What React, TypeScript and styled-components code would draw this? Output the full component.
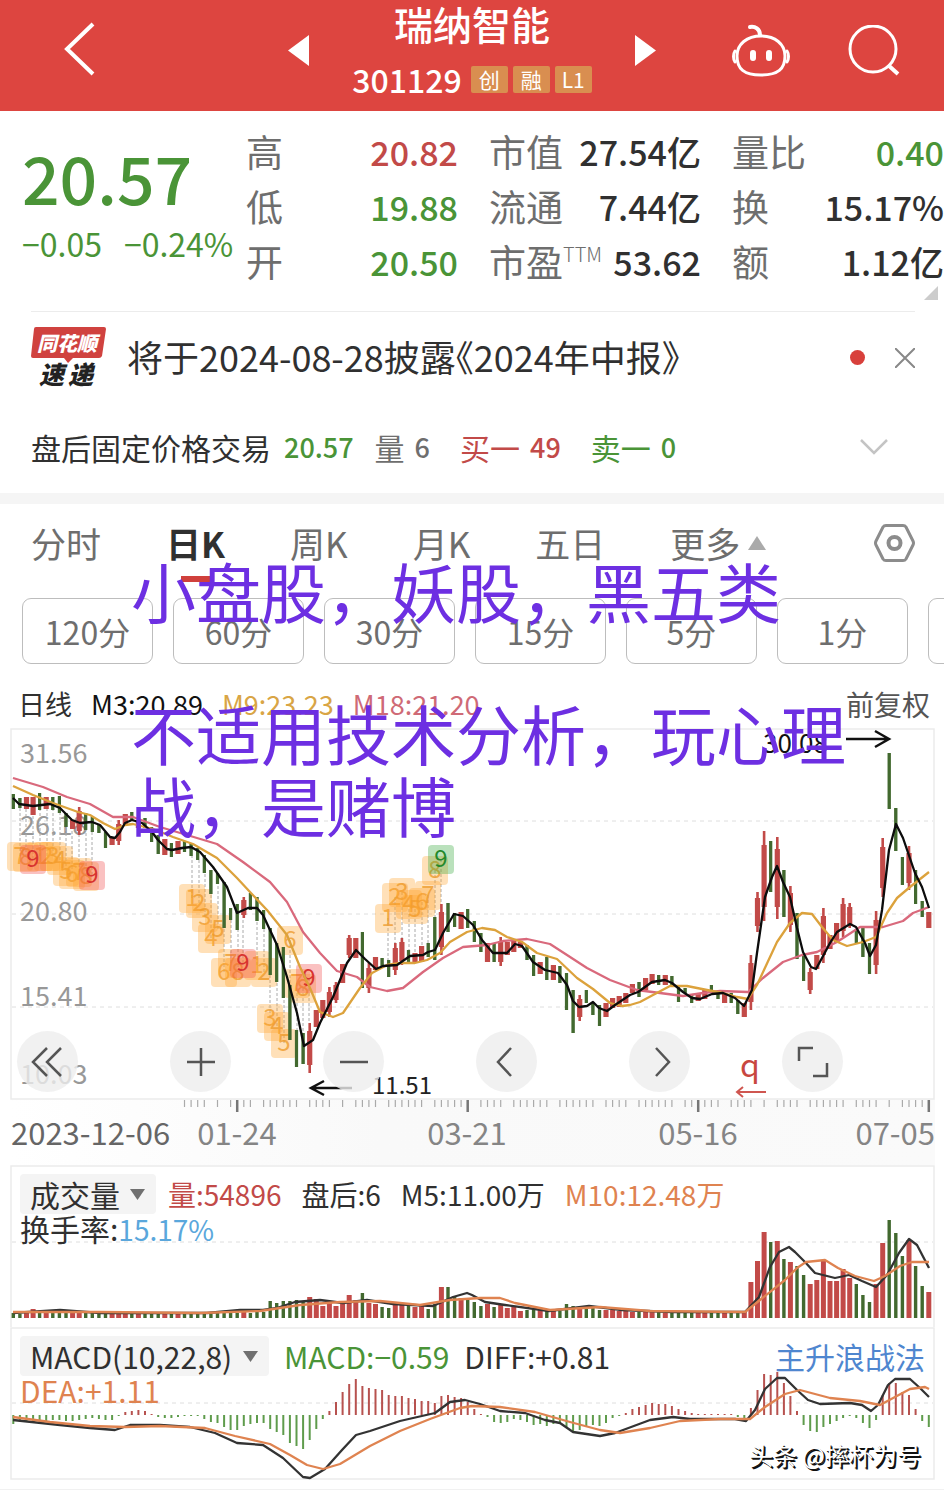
import React from 'react';
import styled, { createGlobalStyle } from 'styled-components';

const RED = '#c24a48';
const GREEN = '#4a9437';
const INK = '#303030';
const GREY = '#6e6e6e';
const ORANGE = '#df8350';

const GlobalStyle = createGlobalStyle`
  * { box-sizing: border-box; }
  body {
    margin: 0;
    background: #fff;
    color: ${INK};
    font-family: 'Noto Sans CJK SC', 'Noto Sans', sans-serif;
    overflow-x: hidden;
  }
  h1, p, dl, dt, dd { margin: 0; font-weight: 400; }
  button, select {
    margin: 0;
    padding: 0;
    border: 0;
    background: none;
    color: inherit;
    font: inherit;
    cursor: pointer;
  }
  svg { display: block; flex: none; }
  svg text { font-family: 'Noto Sans CJK SC', 'Noto Sans', sans-serif; }
`;

/* ---------- header ---------- */

const Header = styled.header`
  display: grid;
  grid-template-columns: 1fr 326px 1fr;
  height: 111px;
  background: #dd4540;
  color: #fff;
`;

const HeaderSide = styled.div<{ $end?: boolean }>`
  display: flex;
  align-items: center;
  justify-content: ${p => (p.$end ? 'flex-start' : 'space-between')};
  gap: 58px;
  padding: ${p => (p.$end ? '0 44px 10px 0' : '0 0 10px 64px')};
  button:nth-child(2) { margin-left: auto; }
`;

const Title = styled.div`
  display: flex;
  flex-direction: column;
  align-items: center;
  h1 {
    font-size: 39px;
    line-height: 46px;
    font-weight: 500;
  }
`;

const CodeLine = styled.div`
  display: flex;
  align-items: center;
  gap: 5px;
  margin-top: 16px;
  font-size: 32px;
  line-height: 34px;
  font-weight: 500;
  span:first-child { margin-right: 4px; }
`;

const Badge = styled.span`
  width: 37px;
  border-radius: 2px;
  background: #d98e50;
  font-size: 21px;
  line-height: 27px;
  font-weight: 400;
  text-align: center;
`;

/* ---------- quote ---------- */

const Quote = styled.section`
  position: relative;
  display: grid;
  grid-template-columns: 215fr 212fr 212fr 212fr;
  column-gap: 31px;
  height: 200px;
  padding-top: 13px;
`;

const PriceBlock = styled.div`
  margin-right: -31px;
  padding: 12px 0 0 22px;
  color: ${GREEN};
`;

const Price = styled.p`
  font-size: 66px;
  line-height: 80px;
  font-weight: 500;
`;

const Change = styled.p`
  display: flex;
  gap: 22px;
  font-size: 32px;
  line-height: 54px;
  white-space: nowrap;
`;

const Stats = styled.dl`
  min-width: 0;
`;

const Stat = styled.div<{ $color?: string }>`
  display: flex;
  align-items: center;
  justify-content: space-between;
  line-height: 55px;
  white-space: nowrap;
  dt { color: ${GREY}; font-size: 37px; display: flex; }
  dt sup { font-size: 20px; line-height: 40px; vertical-align: top; font-weight: 300; }
  dd { color: ${p => p.$color || INK}; font-size: 34px; font-weight: 500; }
`;

const Corner = styled.svg`
  position: absolute;
  right: 6px;
  bottom: 11px;
`;

/* ---------- news and after-hours ---------- */

const News = styled.section`
  display: flex;
  align-items: center;
  height: 92px;
  margin: 0 29px 0 31px;
  border-top: 1px solid #ececec;
  a {
    margin-left: 21px;
    padding-bottom: 4px;
    color: ${INK};
    font-size: 36px;
    line-height: 44px;
    font-feature-settings: 'halt';
    text-decoration: none;
    white-space: nowrap;
  }
`;

const Dot = styled.span`
  width: 15px;
  height: 15px;
  margin: 0 30px 0 auto;
  border-radius: 50%;
  background: #d8403b;
`;

const AfterHours = styled.section`
  display: flex;
  align-items: center;
  height: 90px;
  padding: 0 56px 2px 31px;
  font-size: 30px;
  line-height: 40px;
  white-space: nowrap;
  button { margin-left: auto; }
`;

const Pair = styled.span<{ $color?: string; $gap?: number }>`
  display: flex;
  gap: 10px;
  margin-left: ${p => p.$gap || 30}px;
  color: ${p => p.$color || GREY};
  b { font-size: 27px; font-weight: 500; }
`;

const Band = styled.div`
  height: 11px;
  background: #f5f5f5;
`;

/* ---------- tabs ---------- */

const Board = styled.main`
  position: relative;
`;

const Tabs = styled.nav`
  display: flex;
  align-items: center;
  gap: 65px;
  height: 82px;
  padding: 0 29px 4px 31px;
  font-size: 35px;
  line-height: 78px;
  > button:last-child { margin-left: auto; }
`;

const Tab = styled.button<{ $active?: boolean }>`
  position: relative;
  display: flex;
  align-items: center;
  gap: 8px;
  color: ${p => (p.$active ? INK : GREY)};
  font-weight: ${p => (p.$active ? 700 : 400)};
  white-space: nowrap;
  &::after {
    content: '';
    display: ${p => (p.$active ? 'block' : 'none')};
    position: absolute;
    left: 50%;
    bottom: 0;
    width: 30px;
    height: 6px;
    margin-left: -15px;
    background: #d0403c;
  }
`;

const Periods = styled.div`
  display: flex;
  gap: 20px;
  margin-top: 12px;
  padding-left: 22px;
  overflow: hidden;
`;

const Period = styled.button`
  flex: none;
  width: 131px;
  height: 66px;
  border: 1px solid #bdbdbd;
  border-radius: 9px;
  color: ${GREY};
  font-size: 32px;
  line-height: 62px;
`;

const Legend = styled.div`
  display: flex;
  gap: 19px;
  margin-top: 17px;
  padding: 0 14px 1px 18px;
  font-size: 27px;
  line-height: 46px;
  white-space: nowrap;
`;

const Tint = styled.span<{ $color?: string; $size?: number }>`
  color: ${p => p.$color || INK};
  ${p => p.$size && `font-size: ${p.$size}px;`}
`;

const Adjust = styled.button`
  margin-left: auto;
  color: #555;
  font-size: 28px;
`;

const Annotation = styled.div`
  position: absolute;
  top: 50px;
  left: 131px;
  width: 720px;
  color: #6d2fe2;
  font-size: 65px;
  line-height: 72px;
  pointer-events: none;
  p + p { margin-top: 70px; }
`;

/* ---------- charts ---------- */

const ChartBox = styled.section`
  position: relative;
`;

const Chart = styled.svg`
  width: 100%;
  height: auto;
`;

const Controls = styled.div`
  position: absolute;
  top: 303px;
  left: 17px;
  display: flex;
  gap: 92px;
`;

const RoundButton = styled.button`
  display: grid;
  place-items: center;
  width: 61px;
  height: 61px;
  border-radius: 50%;
  background: rgba(237, 237, 237, 0.8);
`;

const Panel = styled.section`
  display: grid;
  > * { grid-area: 1 / 1; }
`;

const PanelHead = styled.div<{ $size: number }>`
  position: relative;
  align-self: start;
  padding: 9px 19px 0 20px;
  font-size: ${p => p.$size}px;
  line-height: 34px;
  white-space: nowrap;
`;

const PanelRow = styled.div<{ $gap: number }>`
  display: flex;
  align-items: center;
  gap: ${p => p.$gap}px;
  height: 40px;
  margin-bottom: -3px;
  a { margin-left: auto; color: #4f86cf; text-decoration: none; }
`;

const Picker = styled.label<{ $tight?: boolean }>`
  display: flex;
  align-items: center;
  gap: 10px;
  height: 40px;
  margin-right: ${p => (p.$tight ? -8 : 0)}px;
  padding: 0 11px 0 10px;
  border-radius: 4px;
  background: #f4f4f4;
  select {
    appearance: none;
    font-size: 30px;
    line-height: 40px;
    outline: none;
  }
`;

const Watermark = styled.p`
  position: relative;
  align-self: end;
  justify-self: end;
  padding: 0 23px 17px 0;
  color: #fff;
  font-size: 24px;
  line-height: 34px;
  text-shadow: 1px 1px 0 #111, 2px 2px 0 #111;
`;

const Footer = styled.footer`
  height: 2px;
  border-top: 1px solid #f1f1f1;
`;

/* ---------- series ---------- */

const STEP = 6.586;
const xAt = (i: number) => Math.round((13.3 + STEP * i) * 10) / 10;

// One entry per trading day: direction, top and bottom of the bar.
const DAYS = (
  'g794-809 g798-808 r797-809 r797-815 g793-810 r797-809 g797-810 g796-813 g813-827 r820-829 ' +
  'r807-835 g813-830 g817-832 g825-833 g832-848 r837-845 r820-845 r814-824 g812-820 r820-828 ' +
  'g818-828 g827-842 g835-854 r839-855 g843-857 r841-854 g841-852 g843-856 g848-860 g855-873 ' +
  'g870-894 g873-884 g882-928 g908-920 g904-930 r897-918 g893-910 g897-921 g910-929 g928-975 ' +
  'g943-982 g947-998 g985-1040 g1030-1067 g1033-1064 r1023-1073 r1010-1027 r1000-1018 r987-1017 r982-1003 ' +
  'r964-983 r935-958 r938-958 g932-988 r963-993 r957-970 g958-968 g960-977 r943-975 r938-965 ' +
  'g950-963 r953-963 r946-962 g943-957 g917-960 r904-955 g903-932 g913-927 r912-929 g909-928 ' +
  'g921-942 g933-952 r943-962 g943-962 r937-966 r942-955 r940-952 r942-948 g945-960 g955-976 ' +
  'r962-974 g957-980 r965-980 g966-983 g973-1010 g990-1033 r995-1021 g990-1003 g1002-1015 g1005-1026 ' +
  'r1003-1017 r998-1008 r996-1007 r993-1003 r984-993 g982-997 r978-990 r974-984 g975-985 r975-985 ' +
  'g976-987 g987-1002 g988-993 g995-1003 r993-1001 r990-999 g985-993 g993-999 r994-1003 g993-1003 ' +
  'g1000-1014 r1003-1017 r955-1010 r892-932 r831-921 g841-892 r837-919 g870-917 r886-932 g913-959 ' +
  'g955-981 r968-994 r955-969 r908-963 r935-949 r923-943 r898-937 r903-928 g930-943 g928-957 ' +
  'g943-974 r911-974 r838-897 g753-809 g808-851 g857-885 r846-890 g870-904 g901-917 r912-928'
).split(' ').map(s => {
  const [top, bottom] = s.slice(1).split('-').map(Number);
  return { up: s[0] === 'r', top, bottom };
});

const VOLUME = [
  5, 4, 6, 9, 5, 8, 5, 5, 6, 6, 7, 6, 5, 5, 5, 6, 6, 6, 4, 4, 4, 4, 4, 5, 4, 5, 4, 4, 4, 4,
  4, 5, 5, 6, 5, 6, 5, 6, 6, 17, 15, 17, 17, 18, 16, 21, 19, 12, 15, 12, 15, 23, 18, 25, 15, 14, 11, 10, 15, 14,
  13, 11, 12, 9, 14, 31, 31, 22, 20, 18, 16, 12, 14, 11, 14, 10, 11, 7, 8, 9, 8, 7, 8, 7, 14, 12, 9, 12, 10, 8,
  8, 8, 7, 7, 6, 6, 6, 7, 6, 5, 5, 5, 5, 5, 6, 6, 6, 5, 5, 5, 6, 7, 36, 57, 86, 76, 77, 59, 56, 52,
  43, 34, 38, 58, 37, 37, 49, 40, 34, 23, 16, 34, 75, 98, 85, 62, 78, 52, 32, 26,
];

const HISTOGRAM = [
  -9, -7, -7, -7, -7, -6, -5, -5, -6, -6, -5, -4, -3, -4, -5, -5, -1, 3, 4, 5, 4, 1, -2, -3, -3, -2, -1, -1, -1, -4,
  -7, -8, -12, -15, -15, -11, -9, -8, -8, -14, -17, -20, -28, -31, -34, -25, -14, -4, 4, 13, 23, 31, 36, 29, 27, 26, 25, 20, 19, 19,
  17, 16, 14, 14, 12, 19, 20, 18, 17, 13, 6, 1, -2, -7, -8, -7, -4, -5, -7, -10, -9, -11, -9, -9, -13, -17, -15, -11, -10, -11,
  -8, -3, -1, 2, 6, 8, 10, 12, 11, 11, 9, 6, 4, 2, 1, 1, 1, 1, 1, 1, -2, -3, 7, 25, 41, 40, 43, 32, 19, 4,
  -10, -16, -17, -12, -9, -6, -3, -1, -3, -8, -13, -5, 20, 32, 32, 23, 20, 6, -6, -12,
];

const M3 =
  '13,798 19,804 33,806 50,804 60,808 72,820 80,823 92,822 100,825 110,837 115,838 120,832 125,823 132,820 142,823 152,832 158,840 167,849 172,850 182,848 191,847 200,852 213,867 227,887 237,913 248,908 257,908 263,915 277,945 287,977 297,1013 304,1046 313,1040 320,1023 333,997 347,963 356,950 365,959 376,969 383,966 397,965 410,956 423,955 428,952 435,950 443,933 454,914 463,916 473,925 482,940 493,953 507,953 515,944 522,946 533,962 545,970 558,973 567,985 573,1001 579,1007 587,1006 593,1002 599,1008 607,1011 615,1005 630,995 638,992 652,982 665,980 672,983 683,992 692,998 700,999 712,994 723,993 735,998 744,1006 752,990 757,953 765,897 772,877 777,866 783,882 790,897 797,928 803,952 811,967 816,969 822,958 830,943 837,932 850,924 856,927 865,943 870,956 876,945 882,910 889,850 896,824 903,838 915,873 922,887 929,908';
const M9 =
  '13,786 33,795 53,803 78,812 90,815 103,823 115,829 125,825 133,824 153,829 173,837 193,844 217,858 237,878 250,892 267,910 287,935 300,967 310,988 320,1012 333,1017 343,1013 360,988 372,973 387,965 400,963 415,963 427,960 440,953 450,942 467,932 482,928 495,930 507,937 522,942 537,953 557,959 577,978 593,989 610,1003 622,1006 630,1005 640,1002 653,995 670,986 687,986 707,990 723,993 737,997 748,999 757,985 777,942 790,923 802,913 812,914 822,927 833,940 847,946 863,942 876,937 887,913 897,898 910,887 929,872';
const M18 =
  '13,778 43,787 67,797 90,804 113,817 133,817 160,827 187,835 217,844 243,862 270,882 287,902 303,932 320,953 337,971 357,977 370,987 387,991 403,988 423,972 443,958 463,947 487,945 503,941 527,939 550,944 567,955 587,968 610,980 637,990 660,993 683,996 703,993 720,991 748,992 763,978 783,962 802,955 817,952 837,942 860,927 883,927 903,921 913,913 929,907';
const VOL_FAST =
  '13,1313 60,1310 100,1313 167,1313 207,1313 240,1310 263,1310 277,1308 295,1302 320,1300 343,1303 367,1300 393,1304 433,1306 453,1297 467,1293 472,1295 485,1302 505,1305 549,1311 589,1306 622,1310 672,1312 745,1312 759,1297 770,1267 779,1252 789,1247 795,1252 805,1262 815,1273 835,1278 849,1275 862,1281 876,1287 887,1275 899,1253 909,1239 917,1245 929,1268';
const VOL_SLOW =
  '13,1312 100,1312 200,1313 260,1311 300,1305 340,1302 380,1301 420,1305 450,1300 480,1298 500,1298 515,1303 550,1310 600,1307 650,1311 745,1312 760,1300 785,1280 797,1268 806,1262 825,1260 838,1268 855,1276 874,1281 885,1276 900,1266 912,1262 929,1262';
const DIFF =
  '13,1420 60,1425 90,1428 115,1430 130,1425 160,1425 190,1427 215,1433 237,1443 263,1445 283,1458 303,1477 310,1478 325,1469 342,1450 356,1435 370,1431 400,1421 435,1413 450,1402 465,1400 480,1404 500,1411 525,1413 545,1420 560,1423 573,1432 600,1436 615,1433 650,1420 673,1417 690,1419 735,1419 746,1421 755,1410 765,1389 777,1378 785,1378 797,1390 808,1400 820,1404 850,1403 862,1405 871,1411 878,1405 888,1385 895,1379 910,1379 920,1388 929,1397';
const DEA =
  '13,1417 50,1422 90,1426 125,1427 160,1426 205,1428 235,1436 270,1444 290,1455 307,1465 323,1469 340,1464 370,1446 400,1431 430,1419 460,1408 472,1406 500,1407 535,1412 570,1422 600,1430 620,1433 650,1428 680,1421 720,1419 750,1419 765,1407 785,1394 800,1390 830,1398 860,1401 880,1405 895,1397 910,1389 925,1387 929,1389';

// Sequence counters: x, y, digit; a 9 closes the count.
const COUNTS: Array<[number, number, number]> = [
  [20, 856, 7], [26, 857, 8], [40, 856, 1], [47, 856, 2], [53, 856, 3], [60, 860, 4], [66, 871, 5], [72, 874, 6], [79, 872, 7], [86, 876, 8],
  [192, 898, 1], [199, 903, 2], [205, 917, 3], [211, 938, 4], [218, 929, 5], [224, 972, 6], [231, 963, 7], [238, 972, 8],
  [257, 965, 1], [264, 972, 2], [270, 1018, 3], [277, 1026, 4], [284, 1043, 5], [290, 940, 6], [297, 983, 7], [303, 988, 8],
  [388, 918, 1], [395, 897, 2], [402, 892, 3], [409, 904, 4], [415, 909, 5], [422, 902, 6], [428, 895, 7], [435, 870, 8],
  [33, 859, 9], [92, 875, 9], [243, 963, 9], [309, 978, 9], [441, 859, 9],
];

const NO_TICK = new Set([30, 32, 37, 44, 49, 51, 56, 63, 70, 75, 82, 89, 94, 101, 108, 113, 115, 120, 127, 132, 134]);

/* ---------- drawings ---------- */

const NewsLogo = () => (
  <svg width="75" height="64" viewBox="0 0 75 64" role="img" aria-label="同花顺速递">
    <path d="M5 1h68q2 0 2 2l-4 27q-1 2-3 2H42l-5 5-4-5H2q-2 0-2-2L3 3q0-2 2-2z" fill="#d0423f" />
    <text x="36" y="25" fontSize="20" fontWeight="900" fontStyle="italic" fill="#fff" textAnchor="middle">同花顺</text>
    <text x="8" y="58" fontSize="25" fontWeight="900" fontStyle="italic" fill="#222">速</text>
    <text x="37" y="58" fontSize="25" fontWeight="900" fontStyle="italic" fill="#222">递</text>
  </svg>
);

const Down = () => (
  <svg width="15" height="11" viewBox="0 0 15 11"><path d="M0 0h15L7.500 11z" fill="#707070" /></svg>
);

const Stroke = ({ d }: { d: string }) => (
  <svg width="34" height="34" viewBox="0 0 34 34" fill="none" stroke="#555" strokeWidth="2.500"><path d={d} /></svg>
);

const Line = ({ points, color }: { points: string; color: string }) => (
  <polyline points={points} fill="none" stroke={color} strokeWidth="2.300" strokeLinejoin="round" />
);

const Frame = ({ y, height }: { y: number; height: number }) => (
  <rect x="11" y={y} width="923" height={height} fill="#fff" stroke="#ebebeb" strokeWidth="1.500" />
);

const Guide = ({ y }: { y: number }) => (
  <path d={`M12 ${y}H933`} stroke="#dedede" strokeWidth="1" strokeDasharray="4 4" />
);

const PriceChart = () => (
  <Chart viewBox="0 728 944 437" role="img" aria-label="日K线图">
    <defs>
      <linearGradient id="axis" x1="0" x2="1" y1="0" y2="0">
        <stop offset="0" stopColor="#fff" />
        <stop offset="0.4" stopColor="#f9f9f9" />
        <stop offset="1" stopColor="#fafafa" />
      </linearGradient>
    </defs>
    <rect x="11" y="1099" width="924" height="66" fill="url(#axis)" />
    <Frame y={729} height={370} />
    <Guide y={821} /><Guide y={914} /><Guide y={1007} />
    <g fontSize="27" fill="#989898">
      <text x="20" y="763">31.56</text>
      <text x="20" y="835">26.18</text>
      <text x="20" y="921">20.80</text>
      <text x="20" y="1006">15.41</text>
      <text x="20" y="1084">10.03</text>
    </g>
    {COUNTS.map(([x, y], k) => {
      const day = DAYS[Math.round((x - 13.3) / STEP)];
      const end = day.bottom < y ? day.bottom : day.top;
      return <path key={k} d={`M${x} ${y}V${end}`} stroke="#aaa" strokeWidth="1" strokeDasharray="3 2" />;
    })}
    {COUNTS.map(([x, y, n], k) => {
      const tone = n < 9 ? '#ffa32e' : x === 441 ? '#35a83c' : '#f0484a';
      const ink = n < 9 ? '#ee9b2c' : x === 441 ? '#23892b' : '#d8332f';
      return (
        <g key={k}>
          <rect x={x - 13} y={y - 14} width="26" height="29" rx="4" fill={tone} fillOpacity="0.34" />
          <text x={x} y={y + 8} fontSize="24" fill={ink} fillOpacity={n < 9 ? 0.8 : 1} textAnchor="middle">{n}</text>
        </g>
      );
    })}
    {DAYS.map((d, i) => {
      const h = d.bottom - d.top;
      const pad = d.up && h > 20 ? Math.round(h * 0.15) : 0;
      return (
        <g key={i} fill={d.up ? RED : '#42692f'}>
          <rect x={xAt(i) - 1.3} y={d.top} width="2.600" height={h} />
          <rect x={xAt(i) - (d.up ? 2.6 : 1.6)} y={d.top + pad} width={d.up ? 5.2 : 3.2} height={h - 2 * pad} />
        </g>
      );
    })}
    <Line points={M18} color="#d9697c" />
    <Line points={M9} color="#dca23c" />
    <Line points={M3} color="#0c0c0c" />
    <g fill="none" stroke="#111" strokeWidth="2.500">
      <path d="M352 1088H312M324 1081L311 1088L324 1095" />
      <path d="M846 739H888M875 731L889 739L875 747" />
    </g>
    <text x="372" y="1094" fontSize="24" fill="#222">11.51</text>
    <text x="763" y="753" fontSize="26" fill="#111">30.08</text>
    <text x="750" y="1077" fontSize="32" fill="#c8473f" textAnchor="middle">q</text>
    <path d="M766 1092H738M743 1087L737 1092L743 1097" fill="none" stroke="#cf5650" strokeWidth="2" />
    {DAYS.map((_, i) => {
      if (i < 26 || NO_TICK.has(i)) return null;
      const major = i % 35 === 34;
      return <path key={i} d={`M${xAt(i)} 1100V${major ? 1112 : 1107}`} stroke={major ? '#777' : '#aaa'} strokeWidth={major ? 2.5 : 1.2} />;
    })}
    <g fontSize="31" fill="#858585" textAnchor="middle">
      <text x="11" y="1145" textAnchor="start" fill="#666">2023-12-06</text>
      <text x="237" y="1145">01-24</text>
      <text x="467" y="1145">03-21</text>
      <text x="698" y="1145">05-16</text>
      <text x="935" y="1145" textAnchor="end">07-05</text>
    </g>
  </Chart>
);

const VolumeChart = () => (
  <Chart viewBox="0 1165 944 162" role="img" aria-label="成交量图">
    <Frame y={1166} height={170} />
    <Guide y={1242} />
    {VOLUME.map((v, i) => {
      const w = DAYS[i].up ? 5 : 3.4;
      return <rect key={i} x={xAt(i) - w / 2} y={1318 - v} width={w} height={v} fill={DAYS[i].up ? RED : '#42692f'} />;
    })}
    <Line points={VOL_FAST} color="#333" />
    <Line points={VOL_SLOW} color={ORANGE} />
  </Chart>
);

const MacdChart = () => (
  <Chart viewBox="0 1327 944 162" role="img" aria-label="MACD图">
    <Frame y={1328} height={151} />
    <Guide y={1403} />
    {HISTOGRAM.map((v, i) => (
      <rect key={i} x={xAt(i) - 1} y={v > 0 ? 1415 - v : 1415} width="2" height={Math.abs(v)} fill={v > 0 ? '#b7524f' : '#5f9c4c'} />
    ))}
    <Line points={DIFF} color="#333" />
    <Line points={DEA} color={ORANGE} />
  </Chart>
);

const CONTROLS = [
  { label: '最左', d: 'M16 3L2 17L16 31M30 3L16 17L30 31' },
  { label: '放大', d: 'M17 3V31M3 17H31' },
  { label: '缩小', d: 'M3 17H31' },
  { label: '左移', d: 'M21 3L8 17L21 31' },
  { label: '右移', d: 'M13 3L26 17L13 31' },
  { label: '全屏', d: 'M3 16V3H17M31 18V31H17' },
];

export default function App() {
  return (
    <>
      <GlobalStyle />
      <Header>
        <HeaderSide>
          <button aria-label="返回">
            <svg width="32" height="58" viewBox="0 0 32 58" fill="none" stroke="#fff" strokeWidth="4"><path d="M29 2L3 27L29 52" /></svg>
          </button>
          <button aria-label="上一只">
            <svg width="21" height="31" viewBox="0 0 21 31"><path d="M21 0V31L0 15.500z" fill="#fff" /></svg>
          </button>
        </HeaderSide>
        <Title>
          <h1>瑞纳智能</h1>
          <CodeLine>
            <span>301129</span>
            <Badge>创</Badge>
            <Badge>融</Badge>
            <Badge>L1</Badge>
          </CodeLine>
        </Title>
        <HeaderSide $end>
          <button aria-label="下一只">
            <svg width="21" height="31" viewBox="0 0 21 31"><path d="M0 0V31L21 15.500z" fill="#fff" /></svg>
          </button>
          <button aria-label="智能助手">
            <svg width="58" height="54" viewBox="0 0 58 54" fill="none" stroke="#fff" strokeWidth="3" strokeLinecap="round">
              <path d="M29 12C43 12 53 20 53 32C53 45 46 51 29 51C12 51 5 45 5 32C5 20 15 12 29 12z" />
              <path d="M28 11C28 5 23 2 18 3" strokeWidth="4" />
              <path d="M3 27C1 30 1 35 3 38M55 27C57 30 57 35 55 38" />
              <path d="M21 29V34M37 29V34" strokeWidth="6" />
            </svg>
          </button>
          <button aria-label="搜索">
            <svg width="52" height="52" viewBox="0 0 52 52" fill="none" stroke="#fff" strokeWidth="3">
              <circle cx="25" cy="24" r="23" />
              <path d="M40 40L50 49" strokeWidth="4" />
            </svg>
          </button>
        </HeaderSide>
      </Header>

      <Quote>
        <PriceBlock>
          <Price>20.57</Price>
          <Change><span>−0.05</span><span>−0.24%</span></Change>
        </PriceBlock>
        <Stats>
          <Stat $color={RED}><dt>高</dt><dd>20.82</dd></Stat>
          <Stat $color={GREEN}><dt>低</dt><dd>19.88</dd></Stat>
          <Stat $color={GREEN}><dt>开</dt><dd>20.50</dd></Stat>
        </Stats>
        <Stats>
          <Stat><dt>市值</dt><dd>27.54亿</dd></Stat>
          <Stat><dt>流通</dt><dd>7.44亿</dd></Stat>
          <Stat><dt>市盈<sup>TTM</sup></dt><dd>53.62</dd></Stat>
        </Stats>
        <Stats>
          <Stat $color={GREEN}><dt>量比</dt><dd>0.40</dd></Stat>
          <Stat><dt>换</dt><dd>15.17%</dd></Stat>
          <Stat><dt>额</dt><dd>1.12亿</dd></Stat>
        </Stats>
        <Corner width="14" height="14" viewBox="0 0 14 14"><path d="M14 0V14H0z" fill="#ccc" /></Corner>
      </Quote>

      <News>
        <NewsLogo />
        <a href="#report">将于2024-08-28披露《2024年中报》</a>
        <Dot />
        <button aria-label="关闭">
          <svg width="20" height="20" viewBox="0 0 20 20" stroke="#888" strokeWidth="2"><path d="M0 0L20 20M20 0L0 20" /></svg>
        </button>
      </News>

      <AfterHours>
        <span>盘后固定价格交易</span>
        <Pair $color={GREEN} $gap={13}><b>20.57</b></Pair>
        <Pair $gap={21}>量<b>6</b></Pair>
        <Pair $color={RED}>买一<b>49</b></Pair>
        <Pair $color={GREEN}>卖一<b>0</b></Pair>
        <button aria-label="展开">
          <svg width="28" height="16" viewBox="0 0 28 16" fill="none" stroke="#c4c4c4" strokeWidth="2.500"><path d="M1 1L14 14L27 1" /></svg>
        </button>
      </AfterHours>

      <Band />

      <Board>
        <Tabs>
          <Tab>分时</Tab>
          <Tab $active>日K</Tab>
          <Tab>周K</Tab>
          <Tab>月K</Tab>
          <Tab>五日</Tab>
          <Tab>
            更多
            <svg width="18" height="14" viewBox="0 0 18 14"><path d="M9 0L18 14H0z" fill="#aaa" /></svg>
          </Tab>
          <button aria-label="设置">
            <svg width="41" height="40" viewBox="0 0 41 40" fill="none" stroke="#8c8c8c" strokeWidth="3">
              <path d="M12 2.500H29Q31 2.500 32 4L39 18Q40 20 39 22L32 36Q31 37.500 29 37.500H12Q10 37.500 9 36L2 22Q1 20 2 18L9 4Q10 2.500 12 2.500z" />
              <circle cx="20.500" cy="20" r="6" strokeWidth="4" />
            </svg>
          </button>
        </Tabs>

        <Periods>
          {['120分', '60分', '30分', '15分', '5分', '1分', ''].map((t, i) => (
            <Period key={i} aria-label={t || '更多周期'}>{t}</Period>
          ))}
        </Periods>

        <Legend>
          <Tint>日线</Tint>
          <Tint $color="#111">M3:20.89</Tint>
          <Tint $color="#d9a545">M9:23.23</Tint>
          <Tint $color="#cf6a76">M18:21.20</Tint>
          <Adjust>前复权</Adjust>
        </Legend>

        <ChartBox>
          <PriceChart />
          <Controls>
            {CONTROLS.map(c => (
              <RoundButton key={c.label} aria-label={c.label}><Stroke d={c.d} /></RoundButton>
            ))}
          </Controls>
        </ChartBox>

        <Panel>
          <VolumeChart />
          <PanelHead $size={28}>
            <PanelRow $gap={20}>
              <Picker $tight>
                <select aria-label="指标一"><option>成交量</option></select>
                <Down />
              </Picker>
              <Tint $color={RED}>量:54896</Tint>
              <Tint>盘后:6</Tint>
              <Tint>M5:11.00万</Tint>
              <Tint $color={ORANGE}>M10:12.48万</Tint>
            </PanelRow>
            <Tint $size={30}>换手率:</Tint><Tint $color="#5aa7dc">15.17%</Tint>
          </PanelHead>
        </Panel>

        <Panel>
          <MacdChart />
          <PanelHead $size={30}>
            <PanelRow $gap={15}>
              <Picker>
                <select aria-label="指标二"><option>MACD(10,22,8)</option></select>
                <Down />
              </Picker>
              <Tint $color={GREEN}>MACD:−0.59</Tint>
              <Tint>DIFF:+0.81</Tint>
              <a href="#strategy">主升浪战法</a>
            </PanelRow>
            <Tint $color={ORANGE}>DEA:+1.11</Tint>
          </PanelHead>
          <Watermark>头条 @摔杯为号</Watermark>
        </Panel>

        <Annotation>
          <p>小盘股，妖股，黑五类</p>
          <p>不适用技术分析，玩心理战，是赌博</p>
        </Annotation>
      </Board>
      <Footer />
    </>
  );
}
